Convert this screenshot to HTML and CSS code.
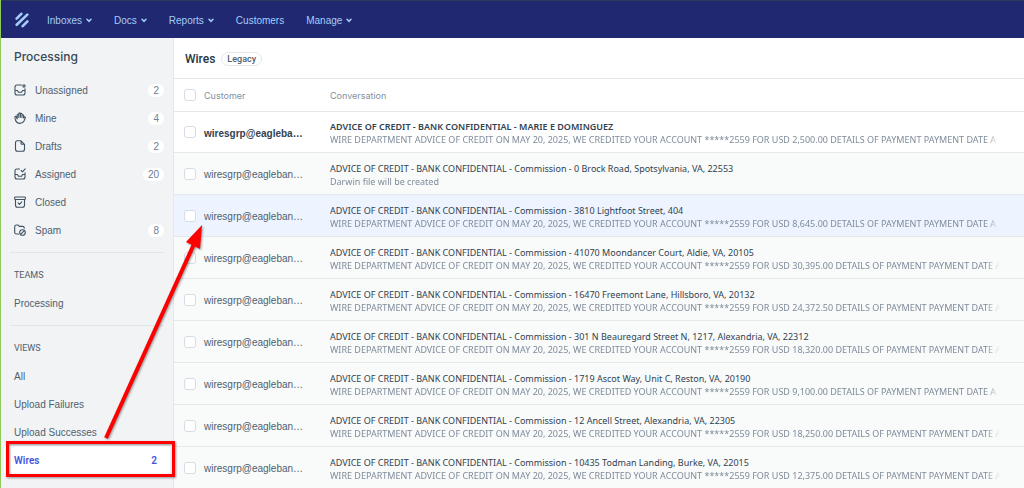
FILE: index.html
```
<!DOCTYPE html>
<html lang="en">
<head>
    <meta charset="UTF-8">
    <meta name="viewport" content="width=device-width, initial-scale=1.0">
    <title>Wires - Processing</title>
    <link rel="stylesheet" href="styles.css">
</head>
<body>
    <div class="app">
        <header class="topbar">
            <a href="#" class="logo" aria-label="Home">
                <svg width="14" height="16" viewBox="0 0 14 16" fill="none" stroke="#a5cdfa" stroke-width="2.6" stroke-linecap="round">
                    <path d="M1.6 6.600 6.300 1.800M1.700 12.800 12.300 2.600M7.700 14.200 12.400 9.400"/>
                </svg>
            </a>
            <nav class="main-nav">
                <button>Inboxes <svg class="chevron" viewBox="0 0 6 5"><path d="M1 1.2 3 3.3 5 1.2"/></svg></button>
                <button>Docs <svg class="chevron" viewBox="0 0 6 5"><path d="M1 1.2 3 3.3 5 1.2"/></svg></button>
                <button>Reports <svg class="chevron" viewBox="0 0 6 5"><path d="M1 1.2 3 3.3 5 1.2"/></svg></button>
                <a href="#">Customers</a>
                <button>Manage <svg class="chevron" viewBox="0 0 6 5"><path d="M1 1.2 3 3.3 5 1.2"/></svg></button>
            </nav>
        </header>

        <div class="layout">
            <aside class="sidebar">
                <h2>Processing</h2>
                <nav class="folders">
                    <a href="#">
                        <svg class="icon" viewBox="0 0 12 12"><path d="M7.5 1H3Q1 1 1 3v6q0 2 2 2h6q2 0 2-2V4.8M1 6.5h2.4l1 1.7h3.2l1-1.7H11"/><circle cx="10" cy="2" r="1.1"/></svg>
                        <span>Unassigned</span><span class="count">2</span>
                    </a>
                    <a href="#">
                        <svg class="icon" viewBox="0 0 12 12"><path d="M3.2 7V2.8q.8-1.2 1.6 0V5.5M4.8 5V1.5q.8-1.2 1.6 0V5.3M6.4 2q.8-1.2 1.6 0V5.5M8 3.2q.8-1 1.6.2V6l.6-.9q1-.5 1.2.4L10 9Q8.800 11.400 6 11.400 3 11.400 1.600 8.500L.9 5.500Q1 4 2.200 4.500L3.200 7"/></svg>
                        <span>Mine</span><span class="count">4</span>
                    </a>
                    <a href="#">
                        <svg class="icon" viewBox="0 0 12 12"><path d="M7 .8H3.500Q1.500.8 1.500 2.800v6.400q0 2 2 2h5q2 0 2-2V4.300ZM7 .8v2.500q0 1 1 1h2.500"/></svg>
                        <span>Drafts</span><span class="count">2</span>
                    </a>
                    <a href="#">
                        <svg class="icon" viewBox="0 0 12 12"><path d="M5.500 1H3Q1 1 1 3v6q0 2 2 2h6q2 0 2-2V4.800M1 6.500h2.400l1 1.700h3.200l1-1.700H11M7.200 2.500 8.500 3.800 11.200.9"/></svg>
                        <span>Assigned</span><span class="count">20</span>
                    </a>
                    <a href="#">
                        <svg class="icon" viewBox="0 0 12 12"><path d="M1.200 1h9.600q.5 0 .5.5V3q0 .5-.5.5H1.200Q.7 3.500.7 3V1.500Q.7 1 1.200 1ZM1.500 3.500v5.700q0 2 2 2h5q2 0 2-2V3.500M4.200 7l1.300 1.300L7.800 5.900"/></svg>
                        <span>Closed</span>
                    </a>
                    <a href="#">
                        <svg class="icon" viewBox="0 0 12 12"><path d="M4.500 10H2.500Q.7 10 .7 8.200V2.800Q.7 1 2.500 1h1.200q.8 0 1.200.7l.4.7H8.500q1.800 0 1.800 1.800"/><circle cx="8.500" cy="8.500" r="2.800"/><path d="M6.600 10.400 10.400 6.600"/></svg>
                        <span>Spam</span><span class="count">8</span>
                    </a>
                </nav>
                <section class="group">
                    <h3>TEAMS</h3>
                    <a href="#">Processing</a>
                </section>
                <section class="group">
                    <h3>VIEWS</h3>
                    <a href="#">All</a>
                    <a href="#">Upload Failures</a>
                    <a href="#">Upload Successes</a>
                    <a href="#" class="active"><span>Wires</span><span>2</span></a>
                </section>
            </aside>

            <main class="content">
                <div class="view-header">
                    <h1>Wires</h1>
                    <span class="tag">Legacy</span>
                </div>
                <table class="conversations">
                    <thead>
                        <tr>
                            <th class="check"><input type="checkbox" aria-label="Select all"></th>
                            <th class="customer">Customer</th>
                            <th>Conversation</th>
                        </tr>
                    </thead>
                    <tbody>
                        <tr class="unread">
                            <td class="check"><input type="checkbox" aria-label="Select conversation"></td>
                            <td class="customer">wiresgrp@eagleba…</td>
                            <td><p class="subject">ADVICE OF CREDIT - BANK CONFIDENTIAL - MARIE E DOMINGUEZ</p><p class="preview">WIRE DEPARTMENT ADVICE OF CREDIT ON MAY 20, 2025, WE CREDITED YOUR ACCOUNT *****2559 FOR USD 2,500.00 DETAILS OF PAYMENT PAYMENT DATE A</p></td>
                        </tr>
                        <tr>
                            <td class="check"><input type="checkbox" aria-label="Select conversation"></td>
                            <td class="customer">wiresgrp@eagleban…</td>
                            <td><p class="subject">ADVICE OF CREDIT - BANK CONFIDENTIAL - Commission - 0 Brock Road, Spotsylvania, VA, 22553</p><p class="preview">Darwin file will be created</p></td>
                        </tr>
                        <tr class="highlighted">
                            <td class="check"><input type="checkbox" aria-label="Select conversation"></td>
                            <td class="customer">wiresgrp@eagleban…</td>
                            <td><p class="subject">ADVICE OF CREDIT - BANK CONFIDENTIAL - Commission - 3810 Lightfoot Street, 404</p><p class="preview">WIRE DEPARTMENT ADVICE OF CREDIT ON MAY 20, 2025, WE CREDITED YOUR ACCOUNT *****2559 FOR USD 8,645.00 DETAILS OF PAYMENT PAYMENT DATE A</p></td>
                        </tr>
                        <tr>
                            <td class="check"><input type="checkbox" aria-label="Select conversation"></td>
                            <td class="customer">wiresgrp@eagleban…</td>
                            <td><p class="subject">ADVICE OF CREDIT - BANK CONFIDENTIAL - Commission - 41070 Moondancer Court, Aldie, VA, 20105</p><p class="preview">WIRE DEPARTMENT ADVICE OF CREDIT ON MAY 20, 2025, WE CREDITED YOUR ACCOUNT *****2559 FOR USD 30,395.00 DETAILS OF PAYMENT PAYMENT DATE A</p></td>
                        </tr>
                        <tr>
                            <td class="check"><input type="checkbox" aria-label="Select conversation"></td>
                            <td class="customer">wiresgrp@eagleban…</td>
                            <td><p class="subject">ADVICE OF CREDIT - BANK CONFIDENTIAL - Commission - 16470 Freemont Lane, Hillsboro, VA, 20132</p><p class="preview">WIRE DEPARTMENT ADVICE OF CREDIT ON MAY 20, 2025, WE CREDITED YOUR ACCOUNT *****2559 FOR USD 24,372.50 DETAILS OF PAYMENT PAYMENT DATE A</p></td>
                        </tr>
                        <tr>
                            <td class="check"><input type="checkbox" aria-label="Select conversation"></td>
                            <td class="customer">wiresgrp@eagleban…</td>
                            <td><p class="subject">ADVICE OF CREDIT - BANK CONFIDENTIAL - Commission - 301 N Beauregard Street N, 1217, Alexandria, VA, 22312</p><p class="preview">WIRE DEPARTMENT ADVICE OF CREDIT ON MAY 20, 2025, WE CREDITED YOUR ACCOUNT *****2559 FOR USD 18,320.00 DETAILS OF PAYMENT PAYMENT DATE A</p></td>
                        </tr>
                        <tr>
                            <td class="check"><input type="checkbox" aria-label="Select conversation"></td>
                            <td class="customer">wiresgrp@eagleban…</td>
                            <td><p class="subject">ADVICE OF CREDIT - BANK CONFIDENTIAL - Commission - 1719 Ascot Way, Unit C, Reston, VA, 20190</p><p class="preview">WIRE DEPARTMENT ADVICE OF CREDIT ON MAY 20, 2025, WE CREDITED YOUR ACCOUNT *****2559 FOR USD 9,100.00 DETAILS OF PAYMENT PAYMENT DATE A</p></td>
                        </tr>
                        <tr>
                            <td class="check"><input type="checkbox" aria-label="Select conversation"></td>
                            <td class="customer">wiresgrp@eagleban…</td>
                            <td><p class="subject">ADVICE OF CREDIT - BANK CONFIDENTIAL - Commission - 12 Ancell Street, Alexandria, VA, 22305</p><p class="preview">WIRE DEPARTMENT ADVICE OF CREDIT ON MAY 20, 2025, WE CREDITED YOUR ACCOUNT *****2559 FOR USD 18,250.00 DETAILS OF PAYMENT PAYMENT DATE A</p></td>
                        </tr>
                        <tr>
                            <td class="check"><input type="checkbox" aria-label="Select conversation"></td>
                            <td class="customer">wiresgrp@eagleban…</td>
                            <td><p class="subject">ADVICE OF CREDIT - BANK CONFIDENTIAL - Commission - 10435 Todman Landing, Burke, VA, 22015</p><p class="preview">WIRE DEPARTMENT ADVICE OF CREDIT ON MAY 20, 2025, WE CREDITED YOUR ACCOUNT *****2559 FOR USD 12,375.00 DETAILS OF PAYMENT PAYMENT DATE A</p></td>
                        </tr>
                    </tbody>
                </table>
            </main>
        </div>

        <!-- callout from the Wires view to its conversations -->
        <svg class="callout" width="210" height="488" viewBox="0 0 210 488">
            <rect x="7.500" y="442.500" width="166" height="33" fill="none" stroke="#ff0000" stroke-width="3"/>
            <path d="M106 438 194 244" stroke="#ff0000" stroke-width="4"/>
            <path d="M202 225 186 242 200 249Z" fill="#ff0000"/>
        </svg>
    </div>
</body>
</html>
```

FILE: styles.css
```
* {
    box-sizing: border-box;
}
body {
    margin: 0;
    font-family: "Liberation Sans", Arial, sans-serif;
    font-size: 10px;
    color: #4f5f6f;
}
h1, h2, h3, p {
    margin: 0;
}
a {
    color: inherit;
    text-decoration: none;
}
.app {
    position: relative;
    display: flex;
    flex-direction: column;
    height: 100vh;
    overflow: hidden;
    border-left: 1px solid #8fcb5a;
}

/* top bar */
.topbar {
    display: flex;
    align-items: center;
    height: 38px;
    flex: none;
    padding-top: 1px;
    padding-left: 14px;
    background: #1f2870;
    border-top: 1px solid #2f3a58;
}
.logo {
    display: flex;
    margin-right: 18px;
}
.main-nav {
    display: flex;
    align-items: center;
    gap: 22px;
}
.main-nav a, .main-nav button {
    display: flex;
    align-items: center;
    gap: 4px;
    padding: 0;
    border: none;
    background: none;
    font: inherit;
    color: #a5cdfa;
    cursor: pointer;
}
.chevron {
    width: 6px;
    height: 5px;
    fill: none;
    stroke: currentColor;
    stroke-width: 1.5;
    stroke-linecap: round;
}
.layout {
    display: flex;
    flex: 1;
    min-height: 0;
}

/* sidebar */
.sidebar {
    width: 173px;
    flex: none;
    padding: 0 3px;
    background: #f1f3f5;
    border-right: 1px solid #e3e8eb;
}
.sidebar h2 {
    padding: 0 10px;
    font-family: Inter, "Liberation Sans", sans-serif;
    font-size: 12px;
    font-weight: 500;
    line-height: 38px;
    color: #394956;
}
.sidebar a {
    display: flex;
    align-items: center;
    height: 28px;
    padding: 0 10px;
}
.icon {
    width: 12px;
    height: 12px;
    margin-right: 9px;
    fill: none;
    stroke: #405261;
    stroke-width: 1.1;
    stroke-linecap: round;
    stroke-linejoin: round;
}
.count {
    margin-left: auto;
    margin-right: -4px;
    padding: 0 5px;
    border-radius: 6px;
    background: #fff;
    line-height: 13px;
    color: #72808e;
}
.group {
    margin: 8px 0 5px;
}
.group::before {
    content: "";
    display: block;
    margin: 0 6px;
    border-top: 1px solid #e1e5e9;
}
.group h3 {
    padding: 8px 10px 0;
    font-family: Roboto, "Liberation Sans", sans-serif;
    font-size: 9px;
    font-weight: 400;
    line-height: 28px;
}
.sidebar .active {
    justify-content: space-between;
    padding-right: 13px;
    border-radius: 3px;
    background: #fff;
    color: #4556df;
    font-family: Roboto, "Liberation Sans", sans-serif;
    font-weight: 600;
}

/* conversation list */
.content {
    flex: 1;
    min-width: 0;
    background: #fff;
}
.view-header {
    display: flex;
    align-items: center;
    gap: 6px;
    height: 41px;
    padding-top: 1px;
    padding-left: 11px;
    border-bottom: 1px solid #e3e8eb;
}
.view-header h1 {
    font-family: Roboto, "Liberation Sans", sans-serif;
    font-size: 12px;
    font-weight: 500;
    color: #253642;
}
.tag {
    padding: 0 5px;
    border: 1px solid #e3e8eb;
    border-radius: 7px;
    font-family: Roboto, "Liberation Sans", sans-serif;
    font-size: 9px;
    font-weight: 500;
    line-height: 12px;
}
.conversations {
    width: 100%;
    table-layout: fixed;
    border-collapse: separate;
    border-spacing: 0;
}
.conversations th, .conversations td {
    padding: 0 24px 0 0;
    border-bottom: 1px solid #e3e8eb;
    text-align: left;
    font-weight: 400;
    vertical-align: middle;
}
.conversations th {
    height: 33px;
    font-family: Inter, "Liberation Sans", sans-serif;
    font-size: 9px;
    color: #8490a0;
}
.conversations td {
    height: 42px;
    padding-top: 2px;
    background: #f9fafa;
}
.conversations .check {
    width: 30px;
    padding: 0 0 0 10px;
}
.conversations .customer {
    width: 126px;
    padding-right: 0;
}
.check input {
    display: block;
    appearance: none;
    width: 12px;
    height: 12px;
    margin: 0;
    border: 1px solid #d5dce3;
    border-radius: 3px;
    background: #fff;
}
.subject, .preview {
    overflow: hidden;
    white-space: nowrap;
    font-family: "Noto Sans", "Liberation Sans", sans-serif;
    font-size: 9px;
    line-height: 13px;
}
.subject {
    color: #314250;
}
.preview {
    color: #7f8c9b;
    mask-image: linear-gradient(to right, #000 calc(100% - 14px), transparent);
}
.conversations .unread td {
    height: 41px;
    background: #fff;
}
.conversations .unread .customer, .unread .subject {
    font-weight: 600;
    color: #314250;
}
.conversations .highlighted td {
    background: #edf4ff;
}

.callout {
    position: absolute;
    top: 0;
    left: -1px;
    pointer-events: none;
    filter: drop-shadow(1px 1px 1px rgba(0, 0, 0, 0.4));
}
```
